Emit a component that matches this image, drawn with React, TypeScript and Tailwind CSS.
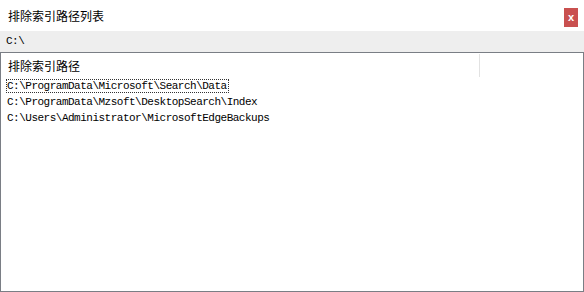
const paths = [
  'C:\\ProgramData\\Microsoft\\Search\\Data',
  'C:\\ProgramData\\Mzsoft\\DesktopSearch\\Index',
  'C:\\Users\\Administrator\\MicrosoftEdgeBackups',
];

const cjk = "font-['Microsoft_YaHei','Noto_Sans_CJK_SC',sans-serif]";
const mono = "font-['Liberation_Mono','Noto_Sans_CJK_SC',monospace]";

export default function App() {
  return (
    <div className="w-[584px] h-[292px] bg-white flex flex-col overflow-hidden">
      {/* title bar */}
      <div className="h-[31px] flex items-center justify-between pl-[8px] pr-[6px] shrink-0">
        <span className={`${cjk} text-[12px] text-black`}>排除索引路径列表</span>
        <button className="w-[14px] h-[19px] bg-[#c9504f] text-white flex items-center justify-center text-[11px] font-bold leading-none font-['Liberation_Sans',sans-serif] mt-[3px]">
          x
        </button>
      </div>

      {/* current path */}
      <div className="h-[21px] bg-[#eeeeee] flex items-center pl-[6px] shrink-0">
        <span className={`${mono} text-[11px] tracking-[-0.5px] text-black`}>C:\</span>
      </div>

      {/* list */}
      <div className="flex-1 border border-[#7a7e85] flex flex-col">
        <div className="h-[25px] flex shrink-0">
          <div className="w-[479px] flex items-center pl-[7px] border-r border-[#e2e2e2] my-[1px]">
            <span className={`${cjk} text-[12px] text-black`}>排除索引路径</span>
          </div>
          <div className="flex-1" />
        </div>
        <div className="flex flex-col pl-[5px]">
          {paths.map((p, i) => (
            <div key={p} className="h-[16px] flex items-center">
              <span
                className={`${mono} text-[11px] tracking-[-0.5px] text-black leading-[14px] pl-[1px] pr-[2px] ${
                  i === 0 ? 'outline outline-1 outline-dotted outline-[#333] -outline-offset-1' : ''
                }`}
              >
                {p}
              </span>
            </div>
          ))}
        </div>
      </div>
    </div>
  );
}
